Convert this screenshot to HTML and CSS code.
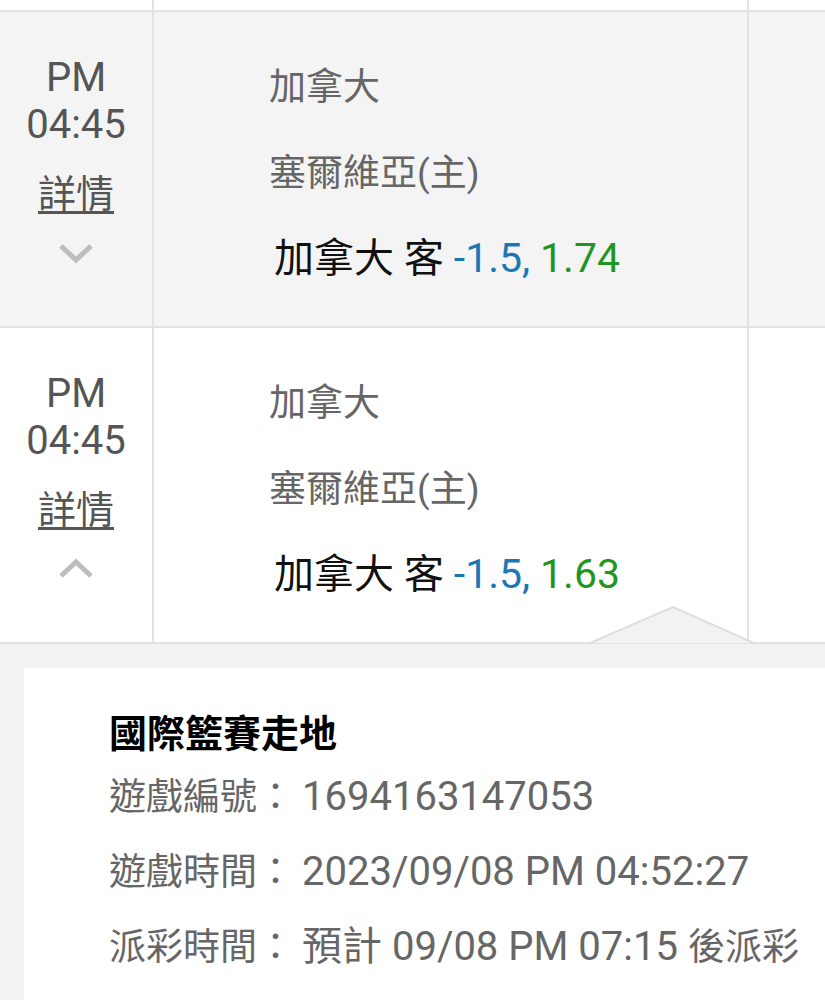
FILE: index.html
```html
<!DOCTYPE html>
<html lang="zh-Hant">
<head>
    <meta charset="UTF-8">
    <meta name="viewport" content="width=device-width, initial-scale=1.0">
    <title>注單紀錄</title>
    <link rel="stylesheet" href="styles.css">
</head>
<body>
    <div class="list">
        <div class="row row-stub">
            <div class="cell cell-time"></div>
            <div class="cell cell-main"></div>
            <div class="cell cell-extra"></div>
        </div>

        <div class="row row-grey">
            <div class="cell cell-time">
                <div class="time">PM<br>04:45</div>
                <a class="detail-link" href="#">詳情</a>
                <svg class="chevron" viewBox="0 0 36 22" width="36" height="22"><polyline points="3,4 18,18 33,4"/></svg>
            </div>
            <div class="cell cell-main">
                <div class="team">加拿大</div>
                <div class="team">塞爾維亞(主)</div>
                <div class="bet">加拿大 客 <span class="line">-1.5,</span> <span class="odds">1.74</span></div>
            </div>
            <div class="cell cell-extra"></div>
        </div>

        <div class="row">
            <div class="cell cell-time">
                <div class="time">PM<br>04:45</div>
                <a class="detail-link" href="#">詳情</a>
                <svg class="chevron" viewBox="0 0 36 22" width="36" height="22"><polyline points="3,18 18,4 33,18"/></svg>
            </div>
            <div class="cell cell-main">
                <div class="team">加拿大</div>
                <div class="team">塞爾維亞(主)</div>
                <div class="bet">加拿大 客 <span class="line">-1.5,</span> <span class="odds">1.63</span></div>
            </div>
            <div class="cell cell-extra"></div>
        </div>

        <div class="details">
            <svg class="notch" viewBox="0 0 164 38" width="164" height="38"><polygon points="0,37 83,1 164,37" class="notch-fill"/><polyline points="0,37 83,1 164,37" class="notch-line"/></svg>
            <div class="panel">
                <h3 class="panel-title">國際籃賽走地</h3>
                <p class="panel-line">遊戲編號：<span class="value">1694163147053</span></p>
                <p class="panel-line">遊戲時間：<span class="value">2023/09/08 PM 04:52:27</span></p>
                <p class="panel-line">派彩時間：<span class="value">預計 </span><span class="value-num">09/08 PM 07:15 </span>後派彩</p>
            </div>
        </div>
    </div>
</body>
</html>
```

FILE: styles.css
```css
body {
    margin: 0;
    font-family: Roboto, "Noto Sans CJK TC", sans-serif;
    background-color: #fff;
    overflow: hidden;
}
.list {
    width: 825px;
}
.row {
    display: grid;
    grid-template-columns: 154px 595px 1fr;
    height: 314px;
    border-bottom: 2px solid #e2e2e2;
    background-color: #fff;
}
.row-stub {
    height: 10px;
}
.row-grey {
    background-color: #f4f4f4;
}
.cell {
    border-right: 2px solid #e2e2e2;
}
.cell-extra {
    border-right: none;
}
.cell-time {
    display: flex;
    flex-direction: column;
    align-items: center;
    padding-top: 42px;
    color: #555;
}
.time {
    font-size: 40px;
    line-height: 47px;
    text-align: center;
}
.detail-link {
    margin-top: 23px;
    font-size: 38px;
    line-height: 46px;
    color: #555;
    text-decoration: underline;
    text-underline-offset: 4px;
    text-decoration-thickness: 3px;
}
.chevron {
    margin-top: 25px;
    fill: none;
    stroke: #bdbdbd;
    stroke-width: 5;
}
.cell-main {
    padding: 52px 0 0 115px;
}
.team {
    font-size: 37px;
    line-height: 48px;
    color: #666;
    margin-bottom: 38px;
}
.bet {
    margin-left: 5px;
    margin-top: -2px;
    font-size: 40px;
    line-height: 48px;
    color: #111;
}
.line {
    color: #1c78b4;
    font-size: 41px;
}
.odds {
    color: #1f961f;
    font-size: 41px;
}
.details {
    position: relative;
    background-color: #f2f2f2;
    padding: 24px 0 0 24px;
    margin-top: -2px;
    border-top: 2px solid #e2e2e2;
}
.notch {
    position: absolute;
    left: 590px;
    top: -38px;
}
.notch-fill {
    fill: #f2f2f2;
}
.notch-line {
    fill: none;
    stroke: #dedede;
    stroke-width: 2;
}
.panel {
    background-color: #fff;
    padding: 40px 0 6px 85px;
}
.panel-title {
    margin: 0 0 12px;
    font-size: 38px;
    line-height: 52px;
    font-weight: bold;
    color: #000;
}
.panel-line {
    margin: 0 0 24px;
    font-size: 37px;
    line-height: 50px;
    color: #666;
    white-space: nowrap;
}
.value {
    margin-left: 8px;
    font-size: 40px;
}
.value-num {
    font-size: 40px;
}
```
